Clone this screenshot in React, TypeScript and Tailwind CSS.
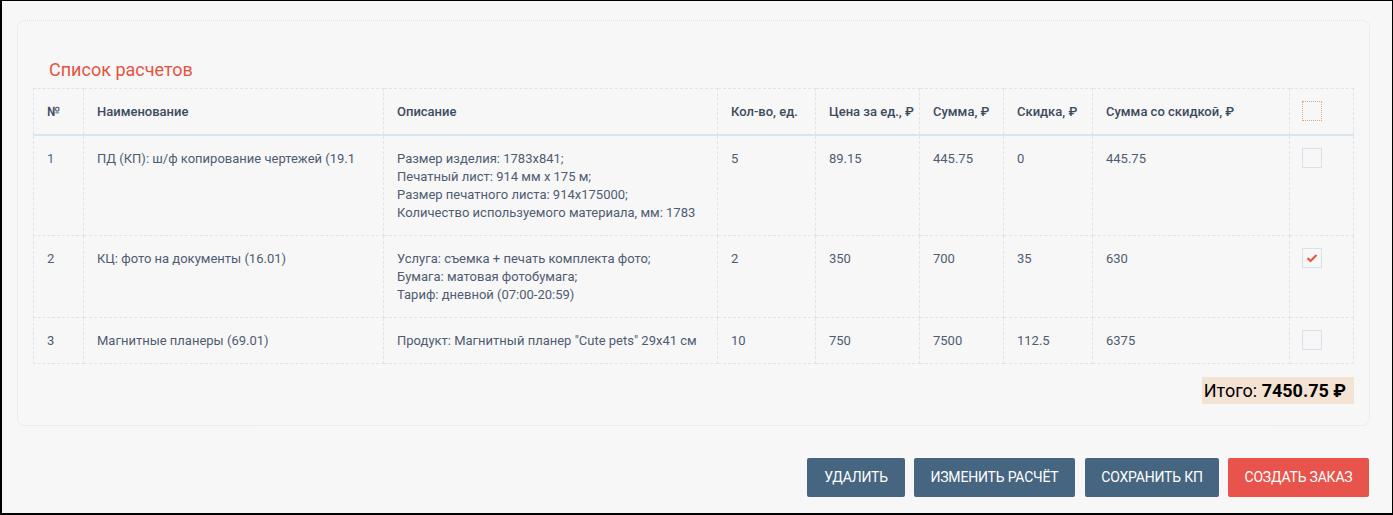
import React from "react";

const rows = [
  {
    n: "1",
    name: "ПД (КП): ш/ф копирование чертежей (19.1",
    desc: [
      "Размер изделия: 1783x841;",
      "Печатный лист: 914 мм x 175 м;",
      "Размер печатного листа: 914x175000;",
      "Количество используемого материала, мм: 1783",
    ],
    qty: "5",
    price: "89.15",
    sum: "445.75",
    disc: "0",
    total: "445.75",
    checked: false,
  },
  {
    n: "2",
    name: "КЦ: фото на документы (16.01)",
    desc: [
      "Услуга: съемка + печать комплекта фото;",
      "Бумага: матовая фотобумага;",
      "Тариф: дневной (07:00-20:59)",
    ],
    qty: "2",
    price: "350",
    sum: "700",
    disc: "35",
    total: "630",
    checked: true,
  },
  {
    n: "3",
    name: "Магнитные планеры (69.01)",
    desc: ['Продукт: Магнитный планер "Cute pets" 29x41 см'],
    qty: "10",
    price: "750",
    sum: "7500",
    disc: "112.5",
    total: "6375",
    checked: false,
  },
];

const widths = [50, 300, 334, 98, 104, 84, 89, 197, 64];

function Check({ checked, header }: { checked?: boolean; header?: boolean }) {
  return (
    <div
      className={
        "w-5 h-5 flex items-center justify-center bg-[#f7f7f8] " +
        (header ? "border border-dotted border-[#e2a47a]" : "border border-[#d9e2ec]")
      }
    >
      {checked && (
        <svg width="12" height="10" viewBox="0 0 12 10">
          <polyline points="1.5,5 4.5,8 10.5,2" fill="none" stroke="#e5533f" strokeWidth="2" />
        </svg>
      )}
    </div>
  );
}

export default function App() {
  const th =
    "border border-dashed border-[#dce4ee] pl-[13px] pr-[4px] pt-[14px] pb-[13px] text-left align-top font-medium text-[#3e4b5e] leading-[18px] whitespace-nowrap";
  const tdBase = "border border-dashed border-[#dce4ee] px-[13px] pt-[14px] pb-[13px] align-top leading-[18px]";
  const td = tdBase + " text-[#4f5c70]";
  return (
    <div
      className="w-[1393px] h-[515px] bg-[#f7f7f8] border-l-2 border-t border-r border-b-2 border-black flex flex-col"
      style={{ fontFamily: "Roboto, 'Liberation Sans', sans-serif" }}
    >
      <div className="ml-[15px] mt-[19px] w-[1353px] h-[406px] border border-dotted border-[#d5e1ee] rounded-lg px-[15px] pt-[38px]">
        <div className="text-[18px] text-[#e5533f] leading-[22px] pl-4 mb-[7px]">Список расчетов</div>
        <table className="table-fixed border-collapse text-[13px] w-[1320px]">
          <colgroup>
            {widths.map((w, i) => (
              <col key={i} style={{ width: w }} />
            ))}
          </colgroup>
          <thead>
            <tr className="border-b-2 border-solid border-[#dce4ee]">
              <th className={th}>№</th>
              <th className={th}>Наименование</th>
              <th className={th}>Описание</th>
              <th className={th}>Кол-во, ед.</th>
              <th className={th}>Цена за ед., ₽</th>
              <th className={th}>Сумма, ₽</th>
              <th className={th}>Скидка, ₽</th>
              <th className={th}>Сумма со скидкой, ₽</th>
              <th className="border border-dashed border-[#dce4ee] px-[12px] pt-[12px] pb-[11px] align-top">
                <Check header />
              </th>
            </tr>
          </thead>
          <tbody>
            {rows.map((r) => (
              <tr key={r.n}>
                <td className={tdBase + (r.n === "1" ? " text-[#3f6a9e]" : " text-[#4f5c70]")}>{r.n}</td>
                <td className={td + " whitespace-nowrap overflow-hidden"}>{r.name}</td>
                <td className={td}>
                  {r.desc.map((d, i) => (
                    <div key={i}>{d}</div>
                  ))}
                </td>
                <td className={td}>{r.qty}</td>
                <td className={td}>{r.price}</td>
                <td className={td}>{r.sum}</td>
                <td className={td}>{r.disc}</td>
                <td className={td}>{r.total}</td>
                <td className="border border-dashed border-[#dce4ee] px-[12px] pt-[12px] pb-[11px] align-top">
                  <Check checked={r.checked} />
                </td>
              </tr>
            ))}
          </tbody>
        </table>
        <div className="flex justify-end mt-[13px]">
          <div className="bg-[#f4e2d3] h-[27px] pl-[2px] pr-[8px] flex items-center text-[18px] text-black">
            <span>Итого:&nbsp;</span>
            <span className="font-bold">7450.75 ₽</span>
          </div>
        </div>
      </div>
      <div className="flex justify-end mt-[32px] mr-[23px]">
        <button className="h-[39px] w-[98px] rounded-[2px] text-white text-[14px] tracking-[-0.2px] bg-[#466580]">
          УДАЛИТЬ
        </button>
        <button className="ml-[9px] h-[39px] w-[161px] rounded-[2px] text-white text-[14px] tracking-[-0.2px] bg-[#466580]">
          ИЗМЕНИТЬ РАСЧЁТ
        </button>
        <button className="ml-[10px] h-[39px] w-[134px] rounded-[2px] text-white text-[14px] tracking-[-0.2px] bg-[#466580]">
          СОХРАНИТЬ КП
        </button>
        <button className="ml-[9px] h-[39px] w-[141px] rounded-[2px] text-white text-[14px] tracking-[-0.2px] bg-[#e8534b]">
          СОЗДАТЬ ЗАКАЗ
        </button>
      </div>
    </div>
  );
}
